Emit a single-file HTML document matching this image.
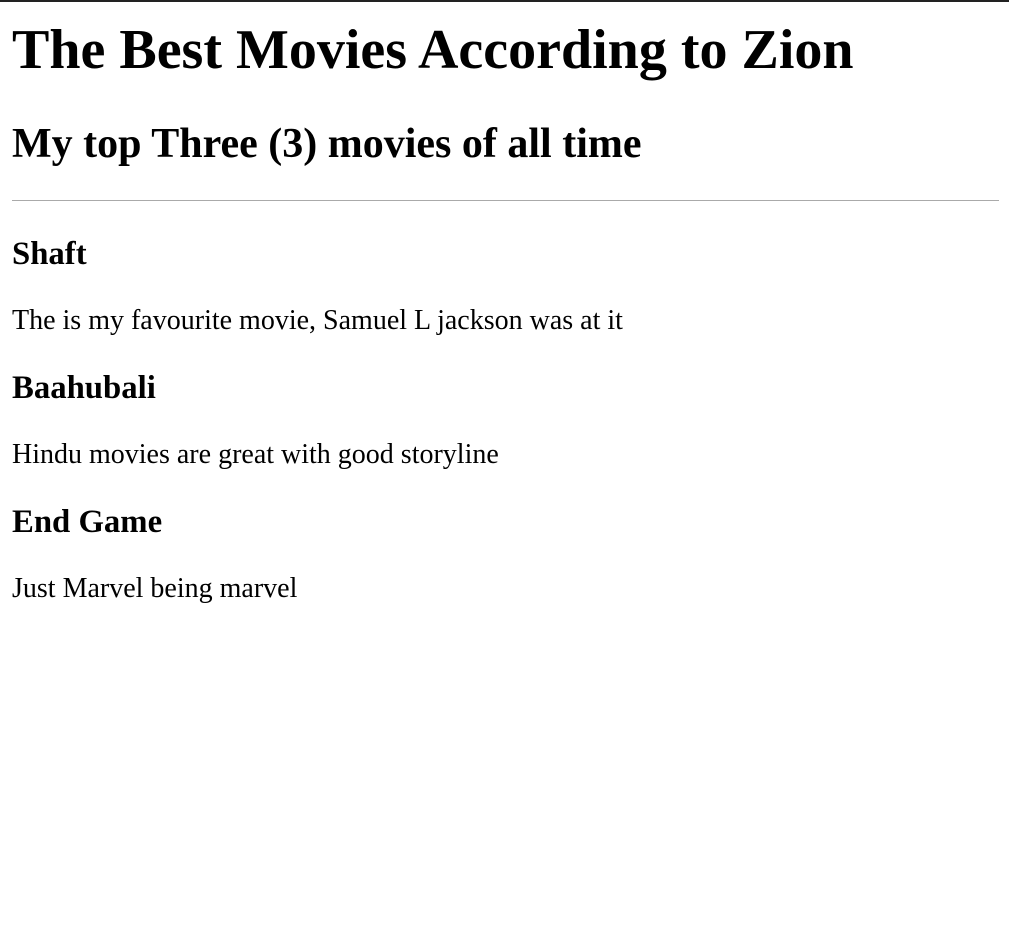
<!DOCTYPE html>
<html><head><meta charset="utf-8"><style>
html,body{margin:0;padding:0;background:#fff;}
body{border-top:2px solid #222;padding:0 10px 0 12px;font-family:"Liberation Serif",serif;color:#000;}
h1,h2,h3,p{margin:0;}
h1{font-size:56px;line-height:64px;margin-top:16px;}
h2{font-size:42px;line-height:48px;margin-top:38px;}
hr{margin:32px 0 0 0;border:0;border-top:1px solid #aaa;height:0;}
h3{font-size:32.76px;line-height:38px;}
p{font-size:28px;line-height:32px;margin-top:32px;}
.h3a{margin-top:34px;}
.h3b{margin-top:32px;}
</style></head><body>
<h1>The Best Movies According to Zion</h1>
<h2>My top Three (3) movies of all time</h2>
<hr>
<h3 class="h3a">Shaft</h3>
<p>The is my favourite movie, Samuel L jackson was at it</p>
<h3 class="h3b">Baahubali</h3>
<p>Hindu movies are great with good storyline</p>
<h3 class="h3b">End Game</h3>
<p>Just Marvel being marvel</p>
</body></html>
